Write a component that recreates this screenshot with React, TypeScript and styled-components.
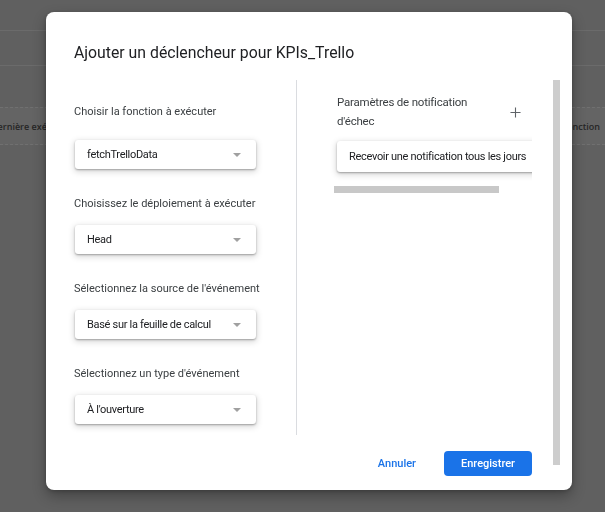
import React from "react";
import styled, { createGlobalStyle } from "styled-components";

const GlobalStyle = createGlobalStyle`
  html, body {
    margin: 0;
    padding: 0;
    width: 605px;
    height: 512px;
    overflow: hidden;
    background: #606060;
    font-family: Roboto, "Liberation Sans", Arial, sans-serif;
  }
  * { box-sizing: border-box; }
`;

const fields = [
  { label: "Choisir la fonction à exécuter", value: "fetchTrelloData" },
  { label: "Choisissez le déploiement à exécuter", value: "Head" },
  { label: "Sélectionnez la source de l'événement", value: "Basé sur la feuille de calcul" },
  { label: "Sélectionnez un type d'événement", value: "À l'ouverture" },
];

/**
 * Page behind the dialog (greyed by the backdrop)
 */
const Page: React.FC = () => (
  <PageWrap>
    <PageRow h={31} />
    <PageRow h={35} />
    <PageSpacer h={41} />
    <HeaderRow>
      <HeaderCell>Dernière exécution</HeaderCell>
      <HeaderCellRight>Fonction</HeaderCellRight>
    </HeaderRow>
  </PageWrap>
);

const SelectBox: React.FC<{ value: string }> = ({ value }) => (
  <Select>
    <SelectText>{value}</SelectText>
    <Caret />
  </Select>
);

export default function App() {
  return (
    <>
      <GlobalStyle />
      <Page />
      <Backdrop>
        <Dialog>
          <Title>Ajouter un déclencheur pour KPIs_Trello</Title>
          <Body>
            <Content>
              <Columns>
                <LeftCol>
                  {fields.map((f, i) => (
                    <Field key={f.label} gap={i === 0 ? 21 : 14}>
                      <Label>{f.label}</Label>
                      <SelectBox value={f.value} />
                    </Field>
                  ))}
                </LeftCol>
                <RightCol>
                  <NotifHead>
                    <NotifTitle>
                      Paramètres de notification
                      <br />
                      d'échec
                    </NotifTitle>
                    <PlusIcon viewBox="0 0 12 12">
                      <path d="M6 0.5v11M0.5 6h11" stroke="#5f6368" strokeWidth="1.2" fill="none" />
                    </PlusIcon>
                  </NotifHead>
                  <NotifCard>Recevoir une notification tous les jours</NotifCard>
                  <HScroll />
                </RightCol>
              </Columns>
              <Footer>
                <TextButton>Annuler</TextButton>
                <PrimaryButton>Enregistrer</PrimaryButton>
              </Footer>
            </Content>
            <VScroll />
          </Body>
        </Dialog>
      </Backdrop>
    </>
  );
}

const PageWrap = styled.div`
  width: 605px;
  height: 512px;
  display: flex;
  flex-direction: column;
`;
const PageRow = styled.div<{ h: number }>`
  height: ${(p) => p.h}px;
  border-bottom: 1px solid #6b6b6b;
`;
const PageSpacer = styled.div<{ h: number }>`
  height: ${(p) => p.h}px;
`;
const HeaderRow = styled.div`
  height: 38px;
  background: #646464;
  border-top: 1px dashed #707070;
  border-bottom: 1px dashed #707070;
  display: flex;
  align-items: center;
  justify-content: space-between;
  font-family: "Open Sans", Roboto, sans-serif;
  font-size: 9px;
  font-weight: 600;
  color: #262626;
`;
const HeaderCell = styled.div`
  margin-left: -9px;
`;
const HeaderCellRight = styled.div`
  margin-right: 5px;
`;

const Backdrop = styled.div`
  position: fixed;
  inset: 0;
  padding: 12px 0 0 46px;
`;
const Dialog = styled.div`
  width: 526px;
  height: 478px;
  background: #fff;
  border-radius: 8px;
  box-shadow: 0 6px 14px rgba(0, 0, 0, 0.3), 0 1px 4px rgba(0, 0, 0, 0.2);
  padding: 0 12px 0 28px;
  display: flex;
  flex-direction: column;
`;
const Title = styled.div`
  padding-top: 31px;
  height: 68px;
  font-size: 15.8px;
  color: #202124;
`;
const Body = styled.div`
  display: flex;
  gap: 21px;
`;
const Content = styled.div`
  width: 458px;
  display: flex;
  flex-direction: column;
`;
const Columns = styled.div`
  height: 355px;
  display: flex;
`;
const LeftCol = styled.div`
  width: 223px;
  border-right: 1px solid #dadce0;
  padding-top: 25px;
  display: flex;
  flex-direction: column;
  gap: 28px;
`;
const Field = styled.div<{ gap: number }>`
  display: flex;
  flex-direction: column;
  gap: ${(p) => p.gap}px;
`;
const Label = styled.div`
  font-size: 11px;
  line-height: 14px;
  color: #3c4043;
`;
const Select = styled.div`
  width: 181px;
  height: 29px;
  margin-left: 1px;
  border-radius: 3px;
  background: #fff;
  box-shadow: 0 1px 2px rgba(0, 0, 0, 0.3), 0 2px 6px 1px rgba(0, 0, 0, 0.15);
  display: flex;
  align-items: center;
  justify-content: space-between;
  padding: 0 15px 0 12px;
`;
const SelectText = styled.span`
  font-size: 11px;
  letter-spacing: -0.3px;
  color: #202124;
  white-space: nowrap;
`;
const Caret = styled.span`
  width: 0;
  height: 0;
  border-left: 4px solid transparent;
  border-right: 4px solid transparent;
  border-top: 4px solid #a0a0a0;
`;
const RightCol = styled.div`
  flex: 1;
  overflow: hidden;
  padding: 13px 0 0 37px;
  display: flex;
  flex-direction: column;
`;
const NotifHead = styled.div`
  display: flex;
  align-items: center;
  justify-content: space-between;
  padding: 0 11px 0 3px;
`;
const NotifTitle = styled.div`
  font-size: 11.5px;
  letter-spacing: -0.2px;
  line-height: 19px;
  color: #3c4043;
`;
const PlusIcon = styled.svg`
  width: 11px;
  height: 11px;
`;
const NotifCard = styled.div`
  margin: 10px 0 0 3px;
  width: 240px;
  height: 31px;
  flex-shrink: 0;
  border-radius: 3px;
  background: #fff;
  box-shadow: 0 1px 2px rgba(0, 0, 0, 0.3), 0 2px 6px 1px rgba(0, 0, 0, 0.15);
  display: flex;
  align-items: center;
  padding-left: 12px;
  font-size: 11px;
  letter-spacing: -0.3px;
  color: #202124;
  white-space: nowrap;
`;
const HScroll = styled.div`
  margin-top: 14px;
  width: 165px;
  height: 7px;
  background: #c8c8c8;
`;
const Footer = styled.div`
  margin-top: 16px;
  height: 25px;
  display: flex;
  justify-content: flex-end;
  align-items: center;
  gap: 26px;
`;
const TextButton = styled.div`
  font-size: 11px;
  font-weight: 500;
  color: #1a73e8;
  padding: 0 2px;
`;
const PrimaryButton = styled.div`
  width: 88px;
  height: 25px;
  border-radius: 4px;
  background: #1a73e8;
  color: #fff;
  font-size: 11px;
  font-weight: 500;
  display: flex;
  align-items: center;
  justify-content: center;
`;
const VScroll = styled.div`
  width: 7px;
  height: 385px;
  background: #cdcdcd;
`;
